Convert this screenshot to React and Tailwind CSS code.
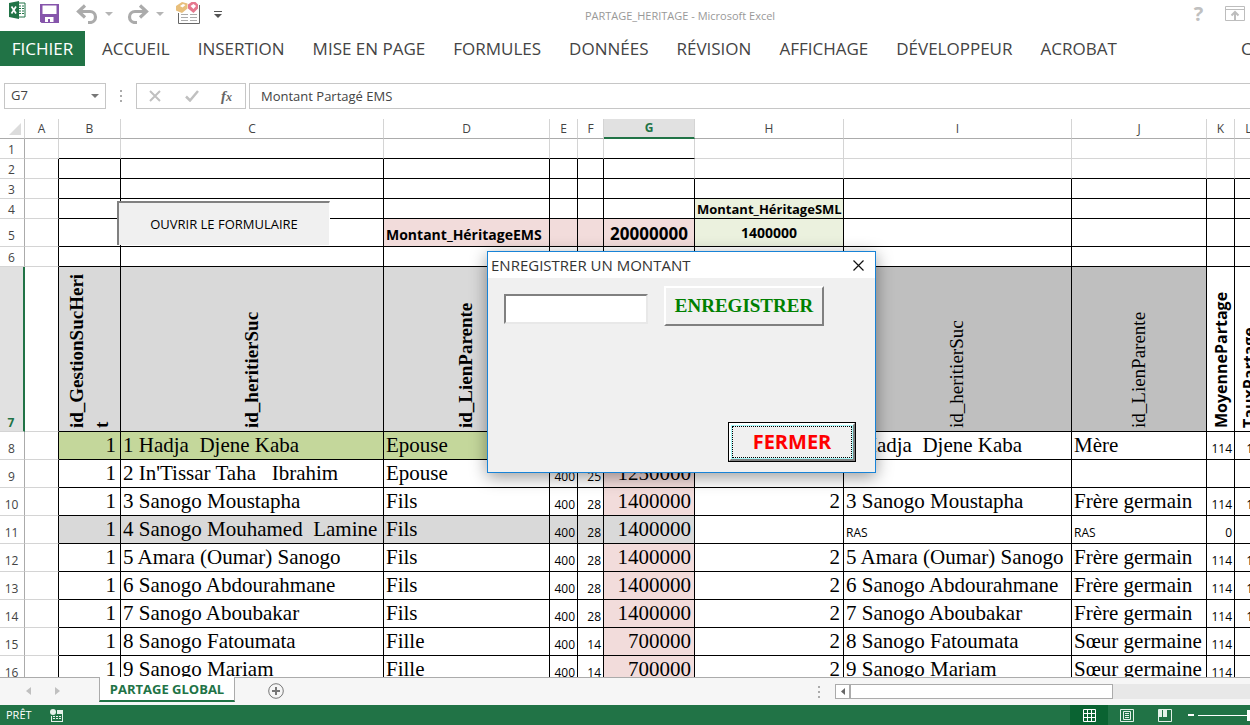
import React, { useState } from "react";
import clsx from "clsx";

const tabs = [
  "ACCUEIL",
  "INSERTION",
  "MISE EN PAGE",
  "FORMULES",
  "DONNÉES",
  "RÉVISION",
  "AFFICHAGE",
  "DÉVELOPPEUR",
  "ACROBAT",
];

const columns = [
  { name: "A", width: "w-[34px]" },
  { name: "B", width: "w-[62px]" },
  { name: "C", width: "w-[263px]" },
  { name: "D", width: "w-[166px]" },
  { name: "E", width: "w-[28px]" },
  { name: "F", width: "w-[26px]" },
  { name: "G", width: "w-[91px]" },
  { name: "H", width: "w-[149px]" },
  { name: "I", width: "w-[228px]" },
  { name: "J", width: "w-[135px]" },
  { name: "K", width: "w-[28px]" },
  { name: "L", width: "w-[28px]" },
];

const heirs = [
  { row: 8, name: "1 Hadja  Djene Kaba", link: "Epouse", f: 25, amount: 1250000, h: 2, i: "1 Hadja  Djene Kaba", j: "Mère", k: 114, l: 14, fill: "bg-[#c4d79b]" },
  { row: 9, name: "2 In'Tissar Taha   Ibrahim", link: "Epouse", f: 25, amount: 1250000 },
  { row: 10, name: "3 Sanogo Moustapha", link: "Fils", f: 28, amount: 1400000, h: 2, i: "3 Sanogo Moustapha", j: "Frère germain", k: 114, l: 14 },
  { row: 11, name: "4 Sanogo Mouhamed  Lamine", link: "Fils", f: 28, amount: 1400000, i: "RAS", j: "RAS", k: 0, small: true, fill: "bg-[#d9d9d9]" },
  { row: 12, name: "5 Amara (Oumar) Sanogo", link: "Fils", f: 28, amount: 1400000, h: 2, i: "5 Amara (Oumar) Sanogo", j: "Frère germain", k: 114, l: 14 },
  { row: 13, name: "6 Sanogo Abdourahmane", link: "Fils", f: 28, amount: 1400000, h: 2, i: "6 Sanogo Abdourahmane", j: "Frère germain", k: 114, l: 14 },
  { row: 14, name: "7 Sanogo Aboubakar", link: "Fils", f: 28, amount: 1400000, h: 2, i: "7 Sanogo Aboubakar", j: "Frère germain", k: 114, l: 14 },
  { row: 15, name: "8 Sanogo Fatoumata", link: "Fille", f: 14, amount: 700000, h: 2, i: "8 Sanogo Fatoumata", j: "Sœur germaine", k: 114, l: 7 },
  { row: 16, name: "9 Sanogo Mariam", link: "Fille", f: 14, amount: 700000, h: 2, i: "9 Sanogo Mariam", j: "Sœur germaine", k: 114, l: 7 },
];

const serif = "font-['Liberation_Serif',serif] text-[21px] leading-[26px] pb-px";
const small = "text-[12px] leading-[21px]";

const Cell = ({ className, children, line = "border-black", pad = "p-0" }) => (
  <td className={clsx("border-r border-b align-bottom whitespace-pre", pad, line, className)}>
    {children}
  </td>
);

const RowHead = ({ n, tall, active }) => (
  <th
    scope="row"
    className={clsx(
      "border-b border-b-[#d4d4d4] p-0 pr-px align-bottom font-['Open_Sans',sans-serif] text-[12px]",
      tall ? "leading-[21px]" : "leading-[17px]",
      active
        ? "border-r-2 border-r-[#217346] bg-[#e1e1e1] font-bold text-[#217346]"
        : "border-r border-r-[#ababab] font-normal text-[#444]"
    )}
  >
    {n}
  </th>
);

const Vertical = ({ className = "mr-[2px]", children }) => (
  <div className="flex h-[164px] justify-center pb-[3px]">
    <div className={clsx("rotate-180 [writing-mode:vertical-rl]", className)}>{children}</div>
  </div>
);

const Caret = ({ className }) => (
  <svg viewBox="0 0 8 4" className={clsx("h-1 w-2", className)} fill="currentColor">
    <path d="M0 0h8L4 4z" />
  </svg>
);

const Dots = () => (
  <svg viewBox="0 0 2 12" className="h-3 w-[2px]" fill="#ababab">
    <path d="M0 0h2v2H0zM0 5h2v2H0zM0 10h2v2H0z" />
  </svg>
);

const TitleBar = () => (
  <header className="flex h-[31px] shrink-0 items-start">
    <svg viewBox="0 0 17 18" className="mt-px ml-[9px] h-[18px] w-[17px]">
      <path d="M9 2h7v14H9z" fill="#fff" stroke="#217346" />
      <path d="M10 5h2M13 5h2M10 7.500h2M13 7.500h2M10 10h2M13 10h2M10 12.500h2M13 12.500h2" stroke="#217346" />
      <path d="M0 2l10-2v18L0 16z" fill="#217346" />
      <path d="M2.500 5.500l4.500 7M7 5.500l-4.500 7" stroke="#fff" strokeWidth="1.700" />
    </svg>
    <button aria-label="Enregistrer" className="mt-1 ml-[14px]">
      <svg viewBox="0 0 19 19" className="h-[19px] w-[19px]">
        <path d="M0 0h19v19H1.500L0 17.500z" fill="#8655ab" />
        <path d="M2.500 1.500h14V10h-14zM5 13h8.500v5H10v-3H8v3H5z" fill="#fff" />
      </svg>
    </button>
    <button aria-label="Annuler" className="mt-1 ml-[17px]">
      <svg viewBox="0 0 22 20" className="h-5 w-[22px]" fill="none" stroke="#ababab" strokeWidth="3.200">
        <path d="M9 1.500L2.500 7.500L9 13.500M3 7.500h11a5.500 5.500 0 0 1 0 11h-2" />
      </svg>
    </button>
    <Caret className="mt-3 ml-[7px] text-[#b5b5b5]" />
    <button aria-label="Rétablir" className="mt-1 ml-[14px]">
      <svg viewBox="0 0 22 20" className="h-5 w-[22px]" fill="none" stroke="#ababab" strokeWidth="3.200">
        <path d="M13 1.500l6.500 6L13 13.500M19 7.500H8A5.500 5.500 0 0 0 8 18.500h2" />
      </svg>
    </button>
    <Caret className="mt-3 ml-[7px] text-[#b5b5b5]" />
    <button aria-label="Formulaire" className="mt-px ml-[12px]">
      <svg viewBox="0 0 25 24" className="h-6 w-[25px]" fill="none">
        <path d="M2.500 12v10.500h21V4" stroke="#666" />
        <path d="M5 13.500h7M14 13.500h7M5 16.500h7M14 16.500h7M5 19.500h7M14 19.500h7" stroke="#ababab" />
        <path d="M0 5l6-4 5.500 1.500v5L6 12l-6-2.500z" fill="#e8bf7c" />
        <path d="M4 5l3-2 2.500 1-3 2.500z" fill="#fff" />
        <path d="M12 3.500L15.500 1h4L22 3.500v4L17.500 12 12 7.500z" fill="#e5788f" />
        <path d="M14.500 5l3-2 2.500 2-2.500 3z" fill="#fff" />
      </svg>
    </button>
    <svg viewBox="0 0 8 7" className="mt-[11px] ml-[13px] h-[7px] w-2" fill="#555">
      <path d="M0 0h8v1H0zM0 3h8L4 7z" />
    </svg>
    <h1 className="min-w-0 flex-1 truncate pt-[7px] pr-[55px] text-center text-[11px] leading-[18px] text-[#999]">
      PARTAGE_HERITAGE - Microsoft Excel
    </h1>
    <button aria-label="Aide" className="mt-[3px] w-[11px] text-[20px] leading-[22px] font-bold text-[#c0c0c0]">
      ?
    </button>
    <button aria-label="Options du ruban" className="mt-[6px] mr-[5px] ml-[21px]">
      <svg viewBox="0 0 20 15" className="h-[15px] w-5" fill="none" stroke="#bdbdbd">
        <path d="M.5.5h19v14H.5zM0 3.500h20" />
        <path d="M10 14V6M6.500 9.500L10 6l3.500 3.500" strokeWidth="2" />
      </svg>
    </button>
  </header>
);

const Ribbon = () => (
  <nav className="flex h-[35px] shrink-0 items-stretch overflow-hidden text-[17px] leading-[35px] text-[#444]">
    <button className="w-[85px] shrink-0 bg-[#217346] text-white">FICHIER</button>
    <div className="ml-[17px] flex shrink-0 gap-7">
      {tabs.map((tab) => (
        <button key={tab}>{tab}</button>
      ))}
    </div>
    <button className="ml-auto w-[9px] shrink-0 overflow-hidden text-left">Connexion</button>
  </nav>
);

const FormulaBar = () => (
  <div className="mt-[17px] mb-[10px] flex h-[26px] shrink-0 items-center pl-1 text-[13px] text-[#444]">
    <div className="flex h-[26px] w-[102px] items-center border border-[#c6c6c6] pr-[6px]">
      <input aria-label="Zone Nom" defaultValue="G7" className="min-w-0 flex-1 pl-[6px] outline-none" />
      <Caret className="text-[#777]" />
    </div>
    <div className="flex w-[30px] justify-center">
      <Dots />
    </div>
    <div className="flex h-[26px] w-[110px] items-center border border-[#c6c6c6]">
      <button aria-label="Annuler la saisie" className="ml-3">
        <svg viewBox="0 0 12 12" className="h-3 w-3" fill="none" stroke="#c0c0c0" strokeWidth="2">
          <path d="M1 1l10 10M11 1L1 11" />
        </svg>
      </button>
      <button aria-label="Valider" className="ml-6">
        <svg viewBox="0 0 14 12" className="h-3 w-[14px]" fill="none" stroke="#c0c0c0" strokeWidth="2.500">
          <path d="M1 6.500l4 4L13 1" />
        </svg>
      </button>
      <button
        aria-label="Insérer une fonction"
        className="ml-[22px] font-['Liberation_Serif',serif] text-[15px] leading-5 font-bold text-[#666] italic"
      >
        f<span className="text-[12px]">x</span>
      </button>
    </div>
    <input
      aria-label="Barre de formule"
      defaultValue="Montant Partagé EMS"
      className="ml-[3px] h-[26px] min-w-0 flex-1 border border-r-0 border-[#c6c6c6] pl-[11px] outline-none"
    />
  </div>
);

const EmptyRow = ({ n }) => (
  <tr className="h-5">
    <RowHead n={n} />
    {columns.map(({ name }) => {
      const right = name >= "H";
      let line = "border-black";
      if (n === 1) {
        line = name === "A" || right ? "border-[#d4d4d4]" : "border-r-[#d4d4d4] border-b-black";
      } else if (name === "A") {
        line = "border-r-black border-b-[#d4d4d4]";
      } else if (n === 2 && name >= "G") {
        line = "border-r-[#d4d4d4] border-b-black";
      }
      return <Cell key={name} line={line} />;
    })}
    <td />
  </tr>
);

const FirstCell = () => <Cell line="border-r-black border-b-[#d4d4d4]" />;

const Sheet = () => (
  <table className="w-full min-w-[1263px] table-fixed border-separate border-spacing-0">
    <colgroup>
      <col className="w-[25px]" />
      {columns.map(({ name, width }) => (
        <col key={name} className={width} />
      ))}
      <col />
    </colgroup>
    <thead>
      <tr className="h-5 text-[12px] leading-[18px] text-[#444]">
        <th className="border-r border-b border-r-[#d4d4d4] border-b-[#ababab] p-0 align-bottom">
          <svg viewBox="0 0 12 12" className="mb-[3px] ml-[9px] h-3 w-3" fill="#dcdcdc">
            <path d="M12 0v12H0z" />
          </svg>
        </th>
        {columns.map(({ name }) => (
          <th
            key={name}
            scope="col"
            className={clsx(
              "border-r border-r-[#d4d4d4] p-0",
              name === "G"
                ? "border-b-2 border-b-[#217346] bg-[#e1e1e1] font-bold text-[#217346]"
                : "border-b border-b-[#ababab] font-normal"
            )}
          >
            {name}
          </th>
        ))}
        <th />
      </tr>
    </thead>
    <tbody>
      <EmptyRow n={1} />
      <EmptyRow n={2} />
      <EmptyRow n={3} />
      <tr className="h-5">
        <RowHead n={4} />
        <FirstCell />
        <Cell />
        <Cell />
        <Cell />
        <Cell />
        <Cell />
        <Cell />
        <Cell pad="pl-[2px]" className="bg-[#ebf1de] text-[13px] leading-[17px] font-bold">Montant_HéritageSML</Cell>
        <Cell />
        <Cell />
        <Cell />
        <Cell />
        <td />
      </tr>
      <tr className="h-7">
        <RowHead n={5} tall />
        <FirstCell />
        <Cell />
        <Cell />
        <Cell pad="pl-[2px]" className="bg-[#f2dcdb] text-[14px] leading-[22px] font-bold">Montant_HéritageEMS</Cell>
        <Cell className="bg-[#f2dcdb]" />
        <Cell className="bg-[#f2dcdb]" />
        <Cell className="bg-[#f2dcdb] text-center text-[17px] leading-[25px] font-bold">20000000</Cell>
        <Cell className="bg-[#ebf1de] text-center text-[14px] leading-[26px] font-bold">1400000</Cell>
        <Cell />
        <Cell />
        <Cell />
        <Cell />
        <td />
      </tr>
      <EmptyRow n={6} />
      <tr className="h-[165px] font-['Liberation_Serif',serif] text-[19px] leading-[25px]">
        <RowHead n={7} active />
        <FirstCell />
        <Cell className="bg-[#d9d9d9] font-bold">
          <Vertical>
            id_GestionSucHeri
            <br />t
          </Vertical>
        </Cell>
        <Cell className="bg-[#d9d9d9] font-bold">
          <Vertical>id_heritierSuc</Vertical>
        </Cell>
        <Cell className="bg-[#d9d9d9] font-bold">
          <Vertical>id_LienParente</Vertical>
        </Cell>
        <Cell className="bg-[#d9d9d9]" />
        <Cell className="bg-[#d9d9d9]" />
        <Cell className="bg-[#d9d9d9]" />
        <Cell className="bg-[#bfbfbf]" />
        <Cell className="bg-[#bfbfbf]">
          <Vertical>id_heritierSuc</Vertical>
        </Cell>
        <Cell className="bg-[#bfbfbf]">
          <Vertical>id_LienParente</Vertical>
        </Cell>
        <Cell>
          <Vertical className="ml-[2px] font-['Open_Sans',sans-serif] text-[16px] font-bold">MoyennePartage</Vertical>
        </Cell>
        <Cell>
          <Vertical className="ml-[2px] font-['Open_Sans',sans-serif] text-[16px] font-bold">TauxPartage</Vertical>
        </Cell>
        <td />
      </tr>
      {heirs.map((heir) => {
        const textFont = heir.small ? small : serif;

        return (
          <tr key={heir.row} className="h-7">
            <RowHead n={heir.row} tall />
            <FirstCell />
            <Cell pad="pr-1" className={clsx(serif, "text-right", heir.fill)}>1</Cell>
            <Cell pad="pl-[2px]" className={clsx(serif, heir.fill)}>{heir.name}</Cell>
            <Cell pad="pl-[2px]" className={clsx(serif, heir.fill)}>{heir.link}</Cell>
            <Cell pad="pr-[2px]" className={clsx(small, "text-right", heir.fill)}>400</Cell>
            <Cell pad="pr-[2px]" className={clsx(small, "text-right", heir.fill)}>{heir.f}</Cell>
            <Cell pad="pr-[3px]" className={clsx(serif, "text-right", heir.fill || "bg-[#f2dcdb]")}>{heir.amount}</Cell>
            <Cell pad="pr-[3px]" className={clsx(serif, "text-right")}>{heir.h}</Cell>
            <Cell pad="pl-[2px]" className={textFont}>{heir.i}</Cell>
            <Cell pad="pl-[2px]" className={textFont}>{heir.j}</Cell>
            <Cell pad="pr-[2px]" className={clsx(small, "text-right")}>{heir.k}</Cell>
            <Cell pad="pr-[2px]" className={clsx(small, "text-right")}>{heir.l}</Cell>
            <td />
          </tr>
        );
      })}
    </tbody>
  </table>
);

const AmountDialog = ({ onClose }) => {
  const [amount, setAmount] = useState("");

  const handleSubmit = (e) => {
    e.preventDefault();
    setAmount("");
  };

  return (
    <div
      role="dialog"
      aria-labelledby="dialog-title"
      className="absolute top-[132px] left-[487px] flex h-[222px] w-[389px] flex-col border border-[#1883d7] bg-[#f0f0f0] shadow-[0_4px_16px_rgba(0,0,0,0.4)]"
    >
      <div className="flex h-[26px] items-center justify-between bg-white pr-[11px] pl-[3px]">
        <h2 id="dialog-title" className="text-[15px] leading-[26px] text-[#333]">
          ENREGISTRER UN MONTANT
        </h2>
        <button aria-label="Fermer la fenêtre" onClick={onClose}>
          <svg viewBox="0 0 11 11" className="h-[11px] w-[11px]" fill="none" stroke="#111" strokeWidth="1.200">
            <path d="M.5.5l10 10M10.500.5l-10 10" />
          </svg>
        </button>
      </div>
      <form onSubmit={handleSubmit} className="flex flex-1 flex-col pt-2 pr-[19px] pb-[10px] pl-4">
        <div className="flex items-start gap-4">
          <input
            aria-label="Montant"
            value={amount}
            onChange={(e) => setAmount(e.target.value)}
            className="mt-2 h-[30px] w-[144px] border-2 border-t-[#808080] border-r-[#e8e8e8] border-b-[#e8e8e8] border-l-[#808080] bg-white px-1 outline-none"
          />
          <button
            type="submit"
            className="h-10 w-40 border-2 border-t-white border-r-[#808080] border-b-[#808080] border-l-white font-['Liberation_Serif',serif] text-[19px] font-bold text-[#008000]"
          >
            ENREGISTRER
          </button>
        </div>
        <button
          type="button"
          onClick={onClose}
          className="mt-auto ml-auto h-10 w-32 border border-black text-[20px] font-bold text-[#ff0000]"
        >
          <span className="block h-full border-2 border-t-white border-r-[#808080] border-b-[#808080] border-l-white p-px">
            <span className="flex h-full items-center justify-center border border-dotted border-black bg-[#f0f0f0] outline outline-[#7ff]/60">
              FERMER
            </span>
          </span>
        </button>
      </form>
    </div>
  );
};

const SheetTabs = () => (
  <div className="flex h-7 shrink-0 items-start border-t border-[#ababab] bg-[#f6f6f6]">
    <div className="flex w-[99px] shrink-0 gap-6 pt-[9px] pl-[26px] text-[#c0c0c0]">
      <button aria-label="Feuille précédente">
        <svg viewBox="0 0 5 8" className="h-2 w-[5px]" fill="currentColor">
          <path d="M5 0v8L0 4z" />
        </svg>
      </button>
      <button aria-label="Feuille suivante">
        <svg viewBox="0 0 5 8" className="h-2 w-[5px]" fill="currentColor">
          <path d="M0 0v8l5-4z" />
        </svg>
      </button>
    </div>
    <button className="-mt-px h-[25px] w-[136px] shrink-0 border-x border-b-2 border-x-[#ababab] border-b-[#217346] bg-white pt-[3px] text-[13px] font-bold text-[#217346]">
      PARTAGE GLOBAL
    </button>
    <button aria-label="Nouvelle feuille" className="mt-[5px] ml-[33px]">
      <svg viewBox="0 0 16 16" className="h-4 w-4" fill="none" stroke="#777">
        <circle cx="8" cy="8" r="7.300" />
        <path d="M8 4v8M4 8h8" strokeWidth="2" />
      </svg>
    </button>
    <div className="mt-2 mr-[15px] ml-auto">
      <Dots />
    </div>
    <div className="mt-[6px] flex h-[15px] w-[415px] bg-[#e8e8e8]">
      <button aria-label="Défiler à gauche" className="flex w-[15px] items-center justify-center border border-[#ababab] bg-white">
        <svg viewBox="0 0 4 7" className="h-[7px] w-1" fill="#666">
          <path d="M4 0v7L0 3.500z" />
        </svg>
      </button>
      <div className="w-[263px] border border-[#ababab] bg-white" />
    </div>
  </div>
);

const StatusBar = () => (
  <footer className="flex h-5 shrink-0 items-center bg-[#217346] text-[11px] text-white">
    <span className="pl-[6px]">PRÊT</span>
    <button aria-label="Enregistrer une macro" className="ml-[18px]">
      <svg viewBox="0 0 13 13" className="h-[13px] w-[13px]" fill="#e4f1e9">
        <circle cx="3" cy="3" r="3" />
        <path d="M7 1h6v12H1V7h1v5h10V5H7z" />
        <path d="M3 7h2v1H3zM6 7h2v1H6zM9 7h2v1H9zM3 9h2v1H3zM6 9h2v1H6zM9 9h2v1H9z" />
      </svg>
    </button>
    <div className="ml-auto flex h-full items-center">
      <button aria-label="Normal" className="flex h-full w-[38px] items-center justify-center bg-[#0a6332]">
        <svg viewBox="0 0 13 13" className="h-[13px] w-[13px]" fill="none" stroke="#fff">
          <path d="M.5.5h12v12H.5zM4.500 0v13M8.500 0v13M0 4.500h13M0 8.500h13" />
        </svg>
      </button>
      <button aria-label="Mise en page" className="flex w-[38px] justify-center">
        <svg viewBox="0 0 14 13" className="h-[13px] w-[14px]" fill="none" stroke="#e4f1e9">
          <path d="M.5.5h13v12H.5zM3.500 2.500h7v8h-7zM5 4.500h4M5 6.500h4M5 8.500h4" />
        </svg>
      </button>
      <button aria-label="Aperçu des sauts de page" className="flex w-[38px] justify-center">
        <svg viewBox="0 0 14 13" className="h-[13px] w-[14px]" fill="#e4f1e9">
          <path d="M.5.5h13v12H.5z" fill="none" stroke="#e4f1e9" />
          <path d="M1 1h3v7H1zM5 1h4v7H5z" />
        </svg>
      </button>
      <button aria-label="Zoom arrière" className="ml-1 h-[2px] w-[6px] bg-white" />
      <div className="ml-1 flex w-[52px] items-center">
        <div className="h-px flex-1 bg-white" />
        <div className="h-[11px] w-[3px] bg-white" />
      </div>
    </div>
  </footer>
);

const App = () => {
  const [open, setOpen] = useState(true);

  return (
    <div className="flex h-screen flex-col overflow-hidden bg-white font-['Open_Sans',sans-serif] text-black">
      <TitleBar />
      <Ribbon />
      <FormulaBar />
      <main className="relative min-h-0 flex-1 overflow-hidden">
        <Sheet />
        <button
          onClick={() => setOpen(true)}
          className="absolute top-[82px] left-[117px] h-[44px] w-[213px] border-t-2 border-r border-l-2 border-t-[#808080] border-r-white border-l-[#808080] bg-[#f0f0f0] pt-[2px] text-[13px]"
        >
          OUVRIR LE FORMULAIRE
        </button>
        {open && <AmountDialog onClose={() => setOpen(false)} />}
      </main>
      <SheetTabs />
      <StatusBar />
    </div>
  );
};

export default App;
